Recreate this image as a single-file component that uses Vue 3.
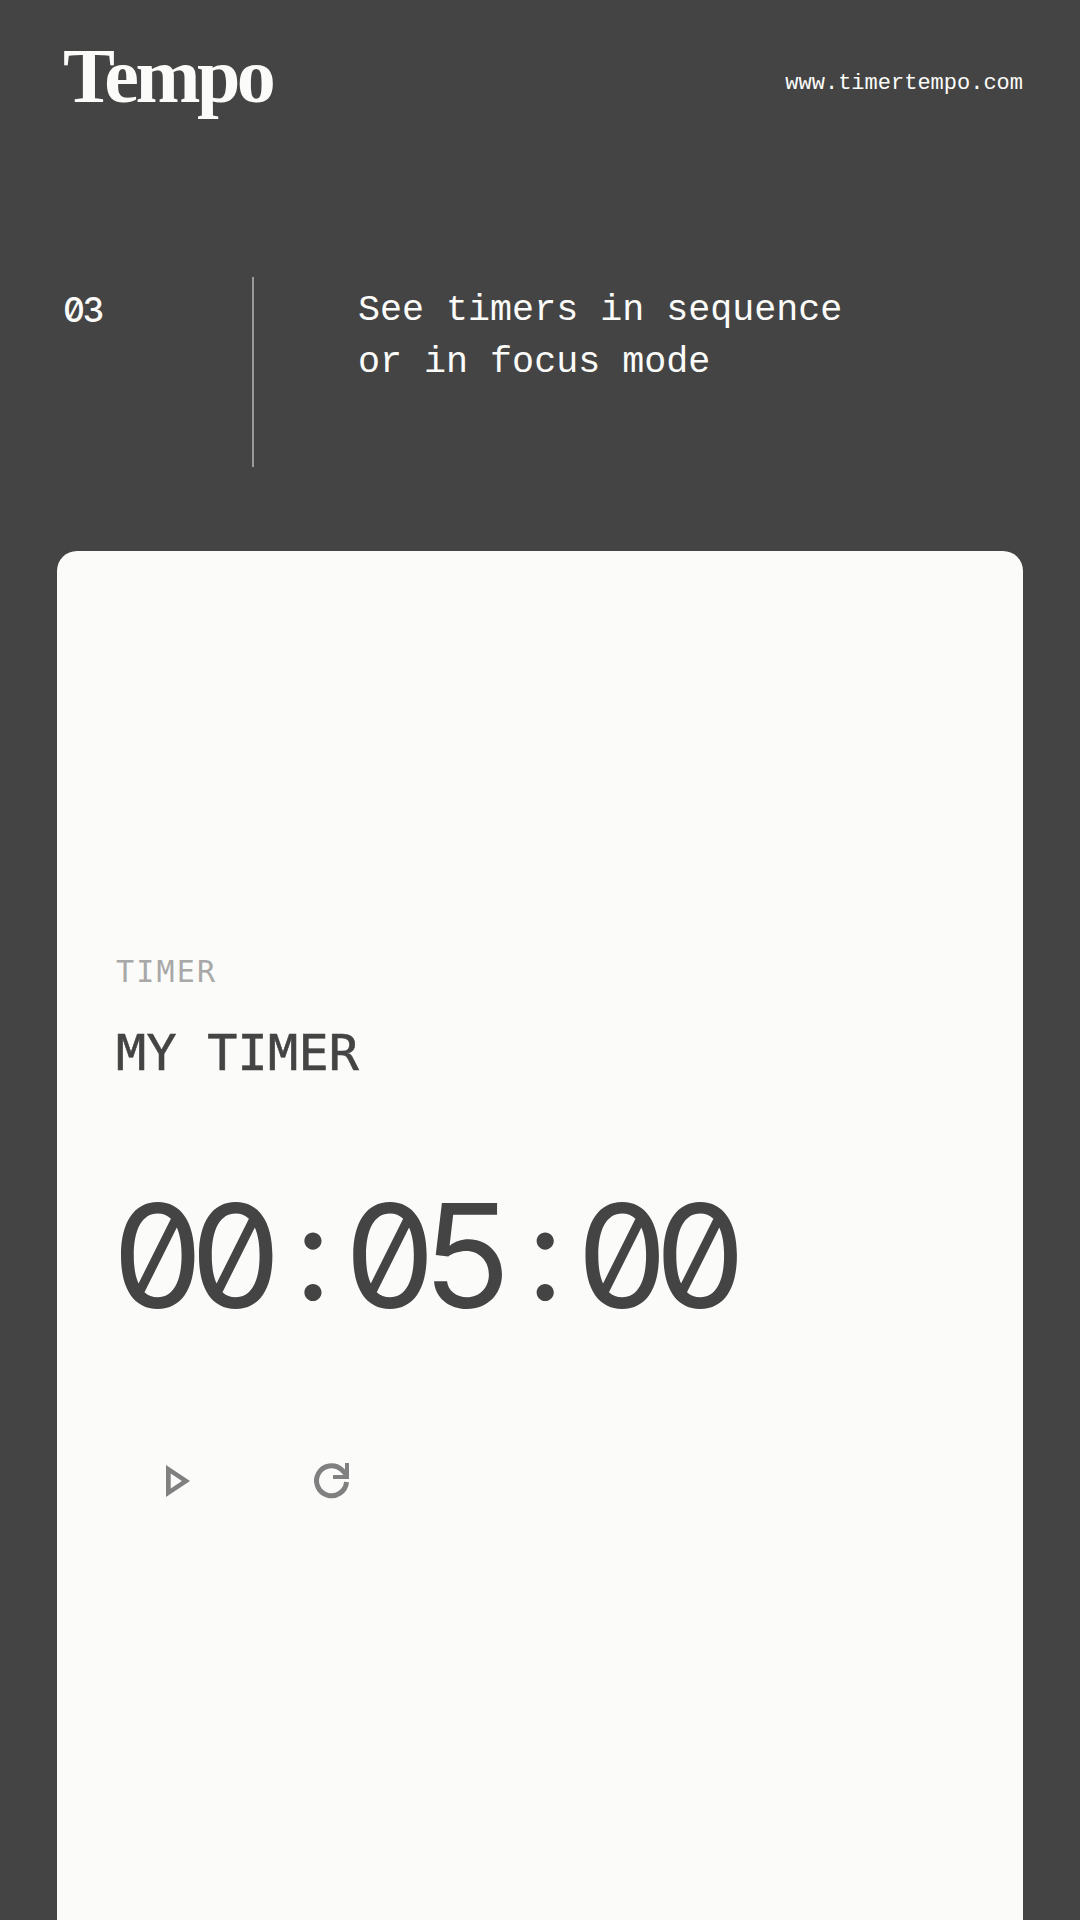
<script setup>
const title = ['See timers in sequence', 'or in focus mode']
</script>

<template>
  <div class="page">
    <header class="top">
      <span class="logo">Tempo</span>
      <span class="site">www.timertempo.com</span>
    </header>

    <section class="step">
      <div class="step-num">03</div>
      <div class="step-rule"></div>
      <h1 class="step-title">
        <span v-for="line in title" :key="line">{{ line }}</span>
      </h1>
    </section>

    <main class="card">
      <p class="kind">TIMER</p>
      <h2 class="name">MY TIMER</h2>
      <div class="clock">
        <span>00</span>
        <span class="colon">:</span>
        <span>05</span>
        <span class="colon">:</span>
        <span>00</span>
      </div>
      <div class="actions">
        <button class="action" aria-label="Start">
          <svg width="30" height="36" viewBox="0 0 30 36">
            <path d="M3 2V34L27 18ZM7.700 10.500V25.500L18.900 18Z" fill="#808080" fill-rule="evenodd" />
          </svg>
        </button>
        <button class="action" aria-label="Reset">
          <svg width="40" height="42" viewBox="0 0 40 42">
            <path d="M34.500 22A15 15 0 1 1 29.500 9.500L34 14" fill="none" stroke="#808080" stroke-width="5" />
            <path d="M37 3V19H21V15H33V3Z" fill="#808080" />
          </svg>
        </button>
      </div>
    </main>
  </div>
</template>

<style>
html,
body {
  margin: 0;
  background: #444444;
}
</style>

<style scoped>
.page {
  height: 1920px;
  overflow: hidden;
  background: #444444;
  color: #fbfbf9;
  display: flex;
  flex-direction: column;
}

.top {
  display: flex;
  justify-content: space-between;
  align-items: center;
  padding: 32px 57px 0 63px;
  height: 92px;
}

.logo {
  margin-top: -5px;
  font-family: "Liberation Serif", serif;
  font-weight: 700;
  font-size: 78px;
  line-height: 92px;
  letter-spacing: -3.500px;
}

.site {
  margin-top: 10px;
  font-family: "Liberation Mono", monospace;
  font-size: 22px;
}

.step {
  display: flex;
  margin-top: 153px;
  height: 190px;
  padding-left: 63px;
}

.step-num {
  width: 189px;
  padding-top: 12px;
  font-family: Inter, sans-serif;
  font-weight: 500;
  font-size: 34px;
  line-height: 42px;
  letter-spacing: -2.400px;
  font-feature-settings: "zero" 1, "tnum" 1;
}

.step-rule {
  width: 2px;
  background: #9a9a9a;
}

.step-title {
  margin: 0 0 0 104px;
  padding-top: 7px;
  font-family: "Liberation Mono", monospace;
  font-weight: 400;
  font-size: 36.700px;
  line-height: 52px;
}

.step-title span {
  display: block;
}

.card {
  flex: 1;
  margin: 84px 57px 0 57px;
  padding: 404px 0 0 59px;
  background: #fbfbf9;
  border-radius: 20px 20px 0 0;
  color: #444444;
}

.kind {
  margin: 0;
  font-family: "DejaVu Sans Mono", monospace;
  font-size: 30px;
  line-height: 34px;
  letter-spacing: 2.200px;
  color: #a8a8a8;
}

.name {
  margin: 36px 0 0;
  font-family: "DejaVu Sans Mono", monospace;
  font-size: 50px;
  line-height: 56px;
  font-weight: 400;
  letter-spacing: 0.300px;
  -webkit-text-stroke: 0.600px #444444;
}

.clock {
  display: flex;
  margin: 100px 0 0 -5px;
  font-family: Inter, sans-serif;
  font-size: 144px;
  line-height: 150px;
  letter-spacing: -15.400px;
  font-feature-settings: "zero" 1, "tnum" 1;
}

.colon {
  box-sizing: border-box;
  width: 76.300px;
  margin-top: -3px;
  padding-left: 15px;
  font-size: 130px;
  letter-spacing: 0;
  text-align: center;
}

.actions {
  display: flex;
  gap: 30px;
  margin-top: 120px;
}

.action {
  width: 124px;
  height: 60px;
  padding: 0;
  border: 0;
  background: none;
  display: flex;
  align-items: center;
  justify-content: center;
}
</style>
